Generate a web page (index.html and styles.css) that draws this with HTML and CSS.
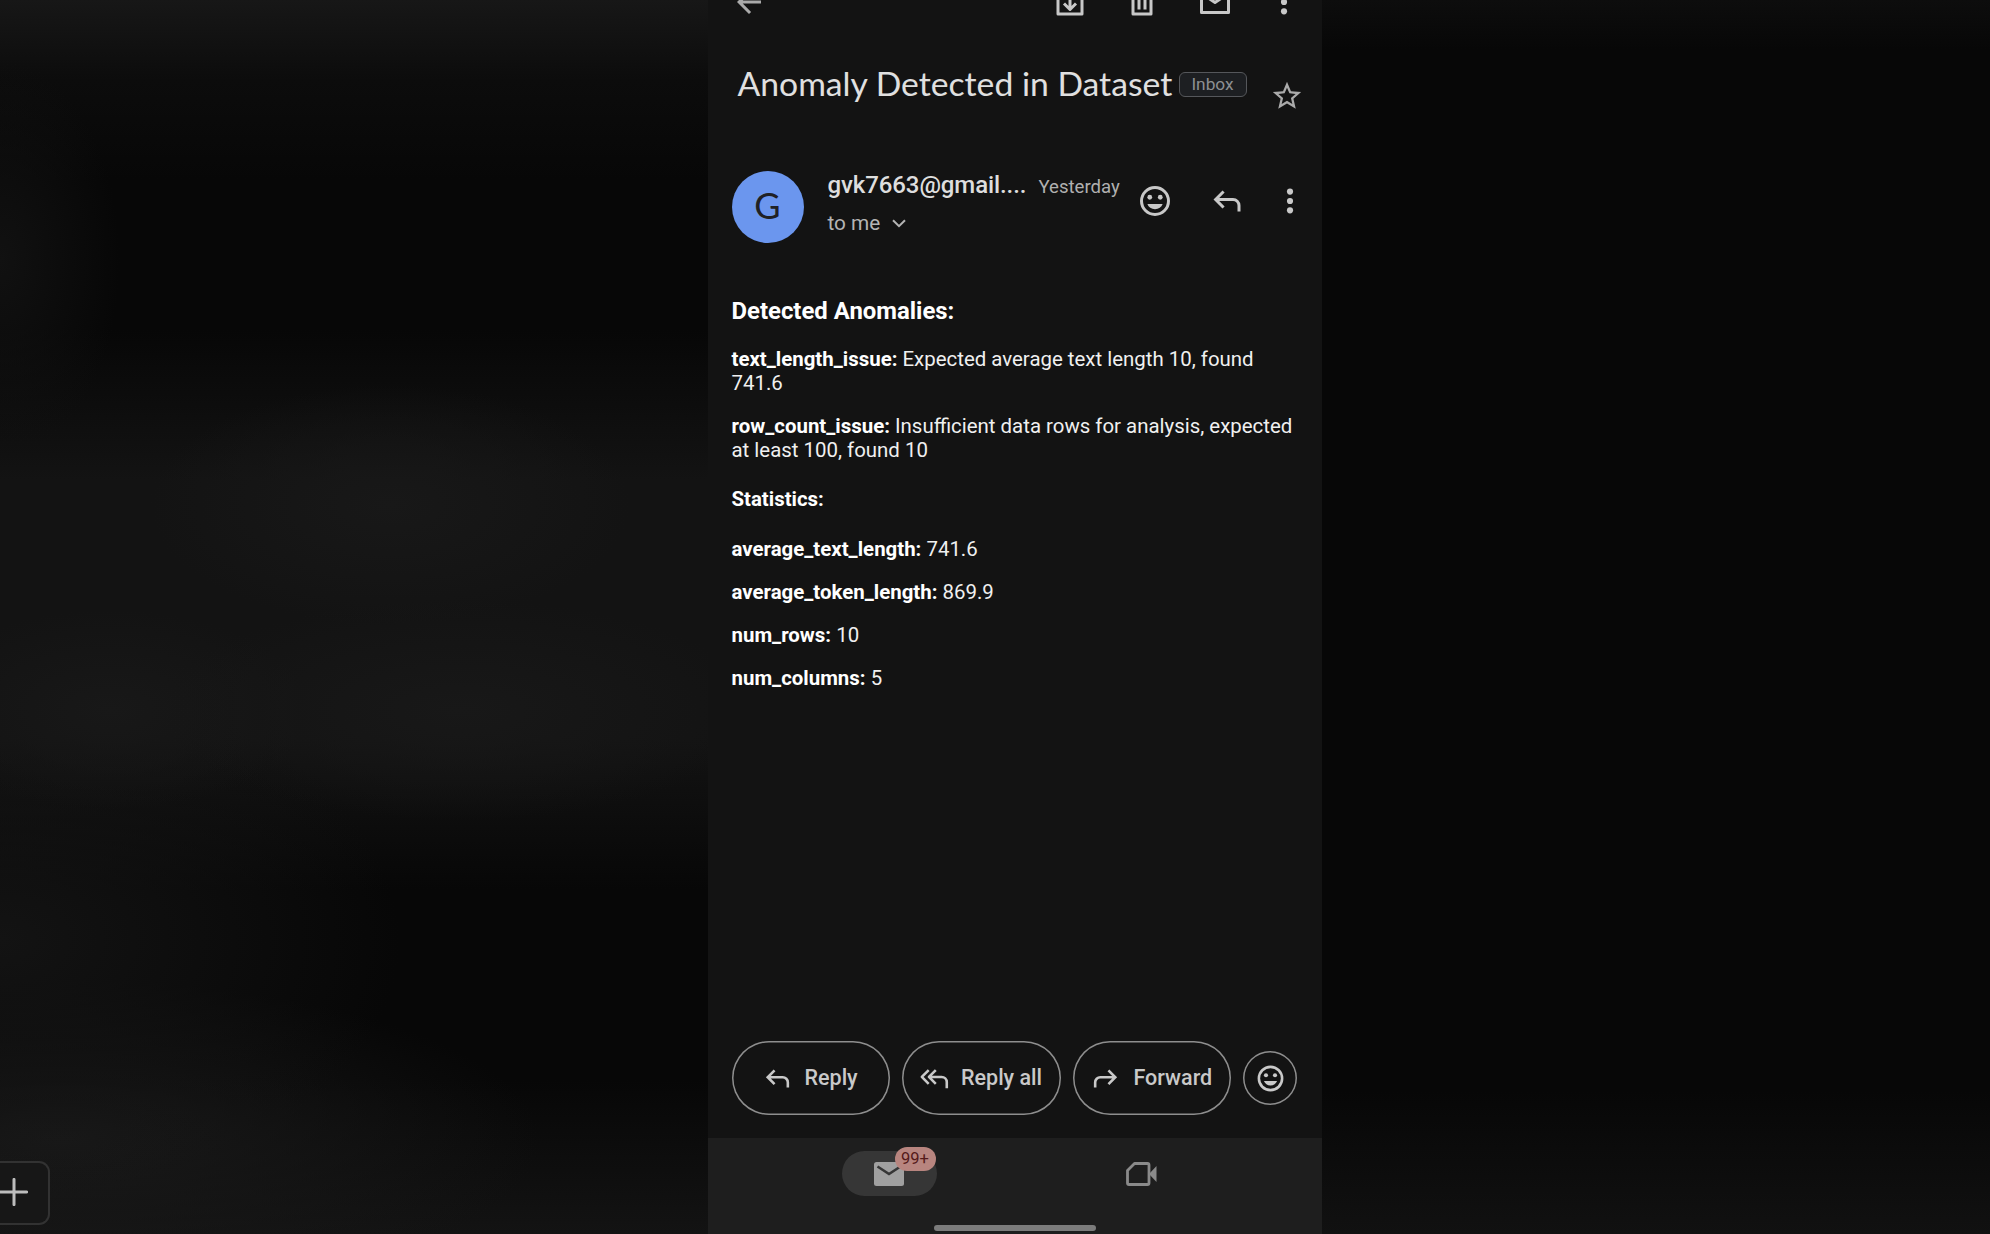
FILE: index.html
```html
<!DOCTYPE html>
<html lang="en">
<head>
<meta charset="utf-8">
<title>Anomaly Detected in Dataset</title>
<link rel="stylesheet" href="styles.css">
</head>
<body>
<svg class="defs" width="0" height="0" aria-hidden="true">
  <symbol id="reply" viewBox="0 -960 960 960"><path d="M760-200v-160q0-50-35-85t-85-35H273l144 144-57 56-240-240 240-240 57 56-144 144h367q83 0 141.5 58.5T840-360v160h-80Z"/></symbol>
  <symbol id="dots" viewBox="0 0 24 24"><circle cx="12" cy="5.7" r="2.05"/><circle cx="12" cy="12" r="2.05"/><circle cx="12" cy="18.2" r="2.05"/></symbol>
  <symbol id="smile" viewBox="0 0 24 24"><circle cx="12" cy="12" r="9" fill="none" stroke="currentColor" stroke-width="2"/><circle cx="8.5" cy="9.5" r="1.6"/><circle cx="15.5" cy="9.5" r="1.6"/><path d="M6.900 14h10.200c-.8 2.100-2.700 3.500-5.100 3.500s-4.300-1.400-5.100-3.500Z"/></symbol>
</svg>
<div class="stage">
  <aside class="left"><button class="add" aria-label="Add"><svg width="28" height="28" viewBox="0 0 28 28"><path d="M14 1.400v25.200M0 14h26.600" stroke="currentColor" stroke-width="3" stroke-linecap="round"/></svg></button></aside>
  <main class="phone">
    <header class="toolbar">
      <svg class="back" viewBox="0 0 24 24"><path d="M20 11H7.830l5.590-5.590L12 4l-8 8 8 8 1.410-1.410L7.830 13H20z"/></svg>
      <svg class="archive" viewBox="0 0 24 24"><path d="M4 7v13h16V7" class="line"/><path d="M12 9v7.500M8 13l4 4 4-4" class="line"/></svg>
      <svg class="trash" viewBox="0 0 24 24"><path d="M6 5v15h12V5M10 8v9M14 8v9" class="line"/></svg>
      <svg class="unread" viewBox="0 0 24 24"><path d="M3 6v13h18V6M4 7l8 5.300L20 7" class="line"/></svg>
      <svg class="more-top"><use href="#dots"/></svg>
    </header>
    <section class="subject">
      <h1>Anomaly Detected in Dataset</h1>
      <span class="label">Inbox</span>
      <svg class="star" viewBox="0 0 24 24"><path d="M22 9.240l-7.190-.62L12 2 9.190 8.630 2 9.240l5.460 4.730L5.820 21 12 17.270 18.180 21l-1.630-7.030L22 9.240zM12 15.400l-3.760 2.270 1-4.280-3.320-2.880 4.380-.38L12 6.100l1.710 4.040 4.380.38-3.320 2.880 1 4.280L12 15.400z"/></svg>
    </section>
    <section class="sender">
      <div class="avatar">G</div>
      <div class="who">
        <div class="from"><strong>gvk7663@gmail....</strong><time>Yesterday</time></div>
        <div class="to"><span>to me</span><svg width="14" height="9" viewBox="0 0 14 9"><path d="M1 1.200l6 6 6-6" fill="none" stroke="currentColor" stroke-width="2"/></svg></div>
      </div>
      <div class="actions">
        <svg><use href="#smile"/></svg>
        <svg><use href="#reply"/></svg>
        <svg><use href="#dots"/></svg>
      </div>
    </section>
    <article class="message">
      <h3>Detected Anomalies:</h3>
      <p><b>text_length_issue:</b> Expected average text length 10, found 741.6</p>
      <p><b>row_count_issue:</b> Insufficient data rows for analysis, expected at least 100, found 10</p>
      <h4>Statistics:</h4>
      <p><b>average_text_length:</b> 741.6</p>
      <p><b>average_token_length:</b> 869.9</p>
      <p><b>num_rows:</b> 10</p>
      <p><b>num_columns:</b> 5</p>
    </article>
    <div class="replies">
      <button class="pill reply"><svg><use href="#reply"/></svg><span>Reply</span></button>
      <button class="pill reply-all"><svg viewBox="0 0 24 21"><path d="M7.500 4L2.200 9.300l5.300 5.300M13 4L7.700 9.300l5.300 5.300M8 9.300h9.500a4 4 0 0 1 4 4V18" class="line"/></svg><span>Reply all</span></button>
      <button class="pill forward"><svg class="flip"><use href="#reply"/></svg><span>Forward</span></button>
      <button class="react" aria-label="React"><svg><use href="#smile"/></svg></button>
    </div>
    <nav class="nav">
      <div class="tabs">
        <div class="mail-tab"><svg width="30" height="24" viewBox="0 0 30 24"><rect width="30" height="24" rx="2.500"/><path d="M3.500 4.500L15 12l11.500-7.500" fill="none" stroke="#363636" stroke-width="2.600"/></svg><span class="badge">99+</span></div>
        <svg class="meet" width="31" height="24" viewBox="0 0 31 24"><path d="M8.500 1.500H21.500a1.500 1.500 0 0 1 1.500 1.500V21a1.500 1.500 0 0 1-1.500 1.500H3A1.500 1.500 0 0 1 1.500 21V8.500Z" fill="none" stroke="currentColor" stroke-width="2.800" stroke-linejoin="round"/><path d="M23 12l7.500-8v16z"/></svg>
      </div>
      <div class="home"></div>
    </nav>
  </main>
</div>
</body>
</html>
```
FILE: styles.css
```css
* { box-sizing: border-box; }
body { margin: 0; background: #070707; font-family: Roboto, sans-serif; }
svg { fill: currentColor; flex: none; display: block; }
h1, h3, h4, p { margin: 0; }
button { font: inherit; color: inherit; background: none; padding: 0; border: 0; }
.defs { position: absolute; }
.line { fill: none; stroke: currentColor; stroke-width: 2; stroke-linejoin: round; }
.stage {
  display: grid; grid-template-columns: 707.500px 614px 1fr; height: 1234px; overflow: hidden;
  background: linear-gradient(to bottom, #0d0d0d, #070707 50px, #070707 1090px, #111 1234px);
}
.left {
  display: flex; align-items: flex-end; padding-bottom: 9px;
  background:
    radial-gradient(ellipse 240px 120px at 390px 505px, #181818, transparent),
    radial-gradient(ellipse 300px 110px at 460px 710px, #181818, transparent),
    radial-gradient(ellipse 200px 100px at 110px 710px, #181818, transparent),
    radial-gradient(ellipse 120px 200px at 0 260px, #111, transparent),
    radial-gradient(ellipse 400px 260px at 0 940px, #131313, transparent),
    radial-gradient(ellipse 480px 160px at 60px 1140px, #191919, transparent),
    linear-gradient(to bottom, #171717, #0c0c0c 80px, #070707 180px, #070707 330px, #131313 480px, #131313 740px, #070707 890px, #070707 1080px, #131313 1234px);
}
.add {
  width: 50px; height: 64px; border: 2px solid #323232; border-left: 0; border-radius: 0 11px 11px 0;
  background: #171717; color: #bdbdbd; display: flex; align-items: center; padding-bottom: 2px;
}
.phone { background: #131313; color: #c8c8c8; display: flex; flex-direction: column; height: 1234px; overflow: hidden; }

.toolbar { height: 20px; margin-top: -16px; display: flex; flex: none; padding-left: 23px; }
.toolbar svg { width: 36px; height: 36px; }
.toolbar .back { color: #aaa; }
.archive { margin-left: 285px; }
.trash { margin-left: 36px; }
.unread { margin-left: 37px; }
.more-top { margin-left: 33px; }

.subject { display: flex; height: 120px; padding: 51px 0 0 30px; align-items: flex-start; margin-top: 4px; }
.subject h1 { font: 400 33.700px/48px Lato, sans-serif; width: 441px; color: #e0e0e0; white-space: nowrap; }
.label {
  width: 68px; height: 25px; margin-top: 13px; border: 1.500px solid #55575b; border-radius: 6px; background: #1d1f22;
  color: #8d8f92; font-size: 17.300px; line-height: 22px; text-align: center;
}
.star { width: 34px; height: 34px; margin: 20px 0 0 23px; color: #aaa; }

.sender { display: flex; height: 72px; margin: 43px 0 0 24px; }
.avatar { width: 72px; height: 72px; border-radius: 50%; background: #6b96ee; color: #202124; font: 400 36px/69px Lato, sans-serif; text-align: center; }
.who { margin-left: 24px; width: 309px; }
.from { display: flex; align-items: baseline; height: 40px; line-height: 29px; white-space: nowrap; }
.from strong { font: 500 24px/29px Roboto, sans-serif; letter-spacing: -.1px; color: #dedede; width: 211px; }
.from time { font-size: 18.600px; color: #b0b0b0; }
.to { display: flex; align-items: center; font-size: 20.800px; line-height: 24px; color: #b4b4b4; gap: 12px; }
.actions { display: flex; margin-top: 12px; }
.actions svg { width: 36px; height: 36px; }
.actions svg:nth-child(2) { margin-left: 36px; }
.actions svg:nth-child(3) { margin-left: 27px; }

.message { margin: 54px 23px 0 24px; color: #f0f0f0; font-size: 20.430px; line-height: 24px; }
.message b, .message h3, .message h4 { font-weight: 700; color: #fff; }
.message h3 { font-size: 23.900px; line-height: 28px; margin-bottom: 22px; }
.message p { margin-bottom: 19px; }
.message h4 { font-size: 20.400px; margin: 25px 0 26px; }

.replies { margin: auto 24px 23px; display: flex; align-items: center; gap: 12px; color: #c9c9c9; }
.pill { width: 158.500px; height: 74px; box-shadow: inset 0 0 0 1.500px #8e8e8e; border-radius: 37px; display: flex; align-items: center; font-weight: 500; font-size: 21.500px; white-space: nowrap; }
.pill span { padding-bottom: 1px; }
.pill svg { width: 31px; height: 31px; }
.reply { padding-left: 30px; gap: 12px; }
.reply-all { padding-left: 17px; gap: 11px; }
.forward { padding-left: 17px; gap: 13px; }
.flip { transform: scaleX(-1); }
.react { width: 54px; height: 54px; box-shadow: inset 0 0 0 1.500px #8e8e8e; border-radius: 50%; display: grid; place-items: center; }
.react svg { width: 31px; height: 31px; }

.nav { height: 96px; background: #1e1e1e; flex: none; display: flex; flex-direction: column; align-items: center; justify-content: space-between; padding: 13px 0 3px; }
.tabs { display: flex; width: 100%; align-items: center; padding-left: 134px; }
.mail-tab { position: relative; width: 95px; height: 45px; border-radius: 23px; background: #363636; color: #a0a0a0; padding: 11px 0 0 32px; }
.badge { position: absolute; left: 53px; top: -4px; width: 41px; height: 24px; border-radius: 12px; background: #b8857f; color: #551a1a; font-size: 16.500px; line-height: 24px; text-align: center; }
.meet { margin-left: 189px; color: #8a8a8a; }
.home { width: 162px; height: 6px; border-radius: 3px; background: #7c7c7c; }
```
